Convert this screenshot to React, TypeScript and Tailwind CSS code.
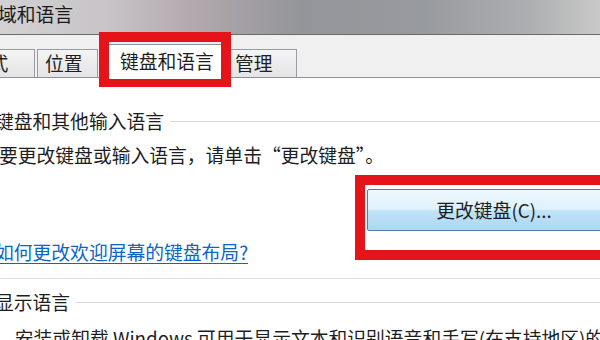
import React from "react";

const FONT = { fontFamily: '"Noto Sans CJK SC", "Noto Sans", sans-serif' };

export default function App() {
  return (
    <div
      className="relative w-[600px] h-[340px] overflow-hidden bg-white text-[18.8px] text-[#1e1e1e]"
      style={FONT}
    >
      {/* title bar */}
      <div className="h-[35px] border-b border-[#6a6a6a] bg-[linear-gradient(90deg,#d2d1d3_0%,#c8c4c7_18%,#b2a9ae_32%,#94959a_50%,#979a9e_70%,#adaeb0_88%,#c9c9c9_100%)] flex items-start">
        <span className="-ml-[2px] leading-[27px] text-[#1a1a1a]">域和语言</span>
      </div>

      {/* tab strip */}
      <div className="h-[43px] bg-[#f0f0f0] border-b border-[#8e9096] flex items-end">
        <div className="-ml-[37px] w-[72px] h-[28px] border border-b-0 border-[#9a9ca2] bg-[linear-gradient(180deg,#f4f4f4,#e4e4e4)] flex items-center justify-center leading-none">
          式
        </div>
        <div className="ml-[2px] w-[61px] h-[28px] border border-b-0 border-[#9a9ca2] bg-[linear-gradient(180deg,#f4f4f4,#e4e4e4)] flex items-center pl-[7px] leading-none">
          位置
        </div>
        <div className="relative z-10 ml-[2px] -mb-px w-[129px] h-[34px] border border-b-0 border-[#8e9096] bg-white flex items-center pl-[19px] leading-none">
          键盘和语言
        </div>
        <div className="w-[68px] h-[28px] border border-b-0 border-[#9a9ca2] bg-[linear-gradient(180deg,#f4f4f4,#e4e4e4)] flex items-center pl-[5px] leading-none">
          管理
        </div>
      </div>

      {/* panel content */}
      <div className="flex flex-col pt-[32px]">
        <div className="h-[22px] flex items-center">
          <span className="-ml-[5px] leading-none whitespace-nowrap">键盘和其他输入语言</span>
          <div className="flex-1 h-px bg-[#d5dde3] ml-[6px]" />
        </div>
        <div className="mt-[12px] h-[22px] flex items-center">
          <span className="-ml-[1px] leading-none whitespace-nowrap">
            要更改键盘或输入语言，请单击“更改键盘”。
          </span>
        </div>
        <div className="mt-[23px] ml-[367px] w-[254px] h-[42px] shrink-0 border border-[#4f7fa6] rounded-[2px] bg-[linear-gradient(180deg,#eef8fe_0%,#dff1fc_48%,#c0e3f8_52%,#acd7f2_100%)] flex items-center justify-center leading-none">
          更改键盘(C)...
        </div>
        <div className="mt-[10px] h-[22px] flex items-center">
          <span className="-ml-[5px] leading-none whitespace-nowrap text-[#0a66c8] underline underline-offset-[3px]">
            如何更改欢迎屏幕的键盘布局?
          </span>
        </div>
        <div className="mt-[15px] h-px bg-[#dedede]" />
        <div className="mt-[12px] h-[22px] flex items-center">
          <span className="-ml-[5px] leading-none whitespace-nowrap">显示语言</span>
          <div className="flex-1 h-px bg-[#d5dde3] ml-[6px]" />
        </div>
        <div className="mt-[14px] h-[22px] flex items-center">
          <span className="-ml-[4px] leading-none whitespace-nowrap">
            ，安装或卸载 Windows 可用于显示文本和识别语音和手写(在支持地区)的语言。
          </span>
        </div>
      </div>

      {/* red annotation boxes */}
      <div className="absolute left-[99px] top-[32px] w-[132px] h-[55px] border-[10px] border-b-[8px] border-[#e5141b] pointer-events-none z-20" />
      <div className="absolute left-[355px] top-[175px] w-[270px] h-[85px] border-[10px] border-[#e5141b] pointer-events-none z-20" />
    </div>
  );
}
